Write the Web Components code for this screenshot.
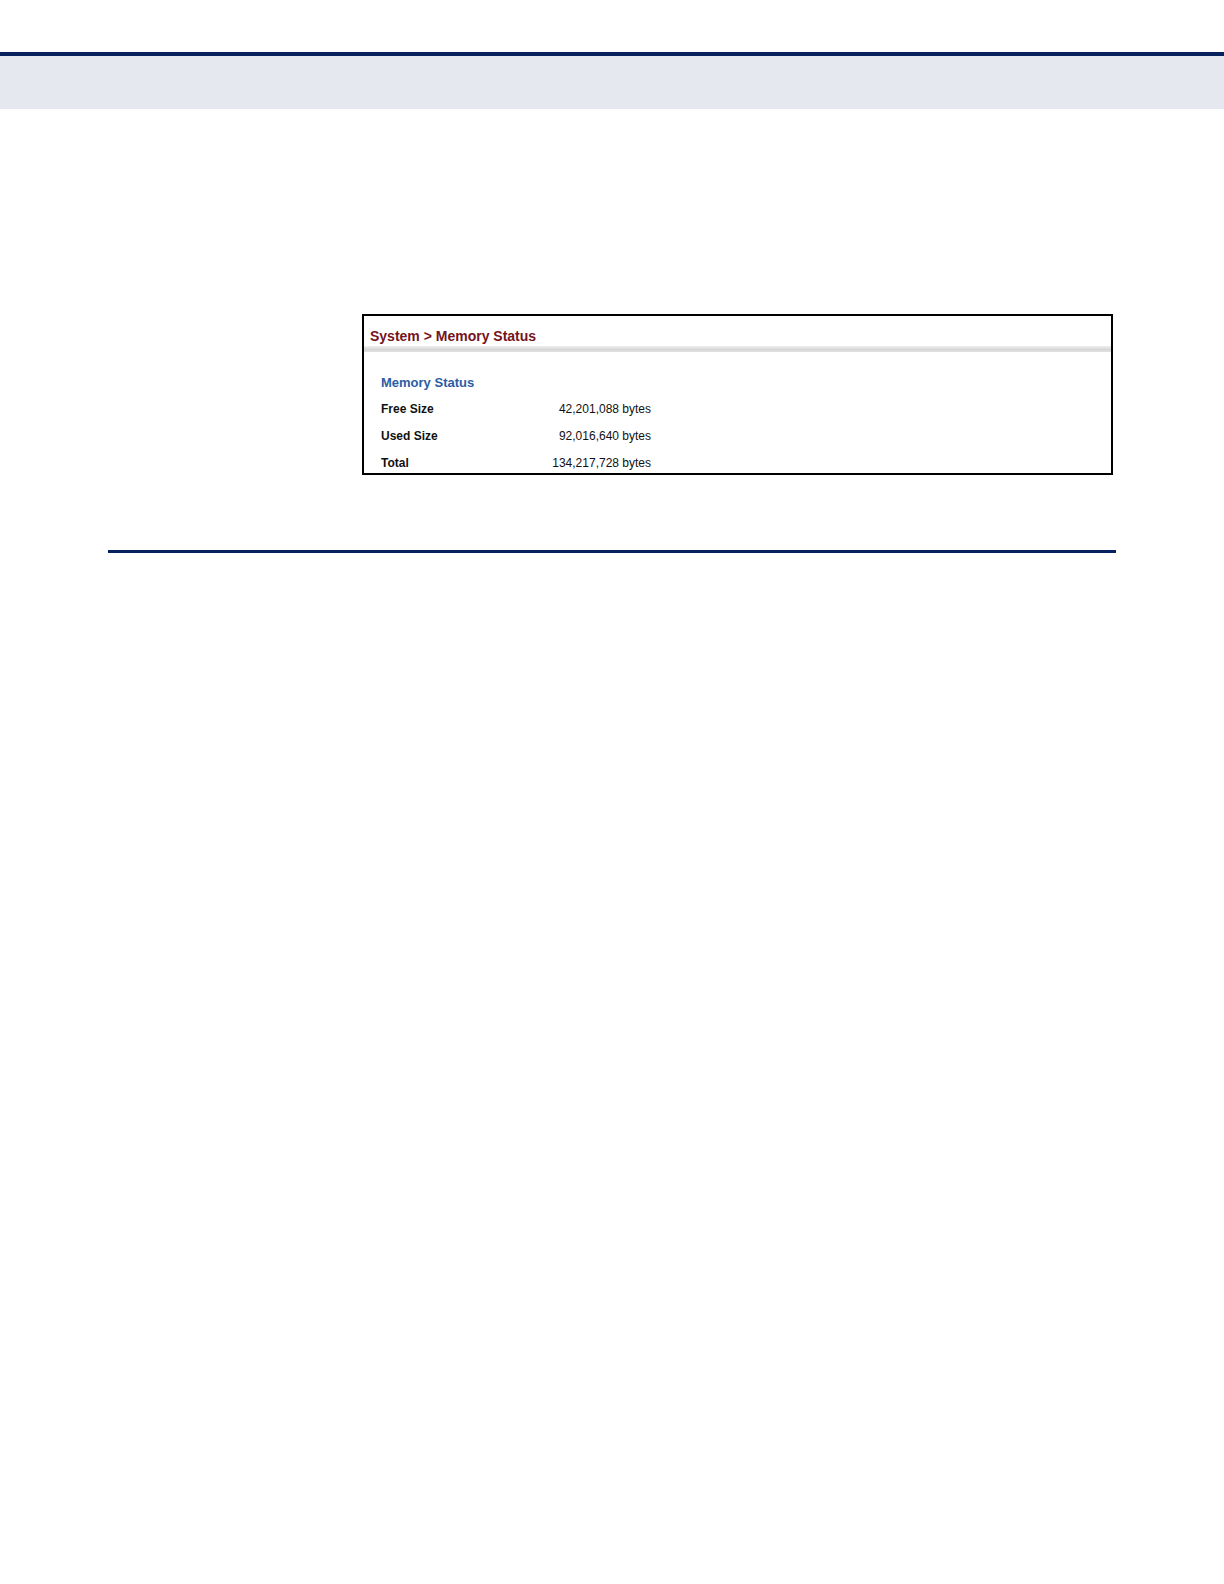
<!DOCTYPE html>
<html lang="en">
<head>
  <meta charset="utf-8">
  <meta name="viewport" content="width=device-width, initial-scale=1">
  <title>Memory Status</title>
  <style>
    body {
      margin: 0;
      background-color: #fff;
      color: #111;
      font-family: "Liberation Sans", Arial, sans-serif;
    }
  </style>
</head>
<body>
  <manual-page>
    <status-panel path="System &gt; Memory Status">
      <memory-table heading="Memory Status"></memory-table>
    </status-panel>
  </manual-page>

  <script>
    class ManualPage extends HTMLElement {
      constructor() {
        super();
        this.attachShadow({ mode: 'open' });
        this.shadowRoot.innerHTML = `
          <style>
            :host {
              display: block;
              padding-top: 52px;
            }

            header {
              height: 53px;
              border-top: 4px solid #06215d;
              background-color: #e5e8ef;
            }

            main {
              margin: 0 108px;
              padding: 205px 3px 75px 254px;
              border-bottom: 3px solid #06215d;
            }
          </style>
          <header></header>
          <main><slot></slot></main>
        `;
      }
    }

    class StatusPanel extends HTMLElement {
      constructor() {
        super();
        this.attachShadow({ mode: 'open' });
      }

      connectedCallback() {
        this.shadowRoot.innerHTML = `
          <style>
            :host {
              display: block;
              border: 2px solid #000;
            }

            h1 {
              margin: 0;
              padding: 10px 6px 0;
              color: #74141c;
              font-size: 14px;
              line-height: 20px;
            }

            .divider {
              height: 6px;
              background: linear-gradient(#f0f0f0, #d6d6d6 60%, #e2e2e2);
            }

            .content {
              padding: 22px 17px 0;
            }
          </style>
          <h1></h1>
          <div class="divider"></div>
          <div class="content"><slot></slot></div>
        `;
        this.shadowRoot.querySelector('h1').textContent = this.getAttribute('path');
      }
    }

    class MemoryTable extends HTMLElement {
      constructor() {
        super();
        this.attachShadow({ mode: 'open' });
        this.rows = [
          ['Free Size', '42,201,088 bytes'],
          ['Used Size', '92,016,640 bytes'],
          ['Total', '134,217,728 bytes'],
        ];
      }

      connectedCallback() {
        this.shadowRoot.innerHTML = `
          <style>
            :host {
              display: block;
            }

            h2 {
              margin: 0;
              color: #2c5da3;
              font-size: 13px;
              line-height: 18px;
            }

            table {
              width: 270px;
              border-collapse: collapse;
              font-size: 12px;
              line-height: 20px;
            }

            th,
            td {
              padding: 7px 0 0;
              text-align: left;
            }

            td {
              text-align: right;
            }
          </style>
          <h2 id="heading"></h2>
          <table aria-labelledby="heading">
            <tbody></tbody>
          </table>
        `;
        this.shadowRoot.querySelector('h2').textContent = this.getAttribute('heading');

        const body = this.shadowRoot.querySelector('tbody');
        for (const [label, value] of this.rows) {
          const row = body.insertRow();
          const header = document.createElement('th');
          header.scope = 'row';
          header.textContent = label;
          row.appendChild(header);
          row.insertCell().textContent = value;
        }
      }
    }

    customElements.define('manual-page', ManualPage);
    customElements.define('status-panel', StatusPanel);
    customElements.define('memory-table', MemoryTable);
  </script>
</body>
</html>
